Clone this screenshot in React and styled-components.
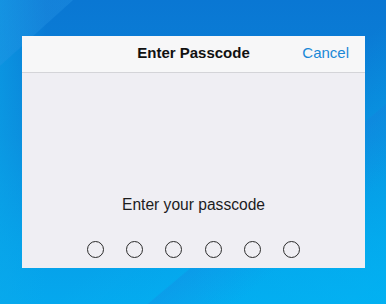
import React from "react";
import styled, { createGlobalStyle } from "styled-components";

const GlobalStyle = createGlobalStyle`
  html, body {
    margin: 0;
    padding: 0;
  }
  body {
    font-family: "Liberation Sans", Arial, sans-serif;
  }
`;

const Desktop = styled.div`
  width: 386px;
  height: 304px;
  box-sizing: border-box;
  padding: 36px 21px 36px 22px;
  overflow: hidden;
  background:
    linear-gradient(138deg, rgba(40, 150, 230, 0.35) 0%, rgba(40, 150, 230, 0.35) 10%, transparent 10.2%),
    linear-gradient(140deg, transparent 68%, rgba(30, 120, 220, 0.25) 68.3%, transparent 80%),
    linear-gradient(-40deg, rgba(0, 185, 245, 0.55) 0%, rgba(0, 185, 245, 0.25) 30%, transparent 45%),
    linear-gradient(to right, rgba(10, 170, 235, 0.5) 0%, transparent 12%),
    linear-gradient(180deg, #0a77d3 0%, #0b86da 45%, #069fe8 80%, #05a8ee 100%);
`;

const Sheet = styled.div`
  width: 343px;
  height: 232px;
  display: flex;
  flex-direction: column;
  background: #efeef3;
`;

const Header = styled.div`
  height: 37px;
  flex-shrink: 0;
  box-sizing: border-box;
  display: grid;
  grid-template-columns: 1fr auto 1fr;
  align-items: center;
  background: #f7f7f8;
  border-bottom: 1px solid #d4d4d8;
  padding: 0 16px 4px;
`;

const Title = styled.div`
  grid-column: 2;
  font-size: 15px;
  font-weight: bold;
  color: #111;
`;

const CancelButton = styled.button`
  justify-self: end;
  border: none;
  background: none;
  padding: 0;
  font-family: inherit;
  font-size: 15px;
  color: #1a88d6;
  cursor: pointer;
`;

const Body = styled.div`
  flex: 1;
  display: flex;
  flex-direction: column;
  align-items: center;
  justify-content: flex-end;
  padding-bottom: 10px;
`;

const Prompt = styled.div`
  font-size: 15.6px;
  line-height: 20px;
  color: #1c1c1e;
  margin-bottom: 26px;
`;

const Dots = styled.div`
  display: flex;
  gap: 22.4px;
`;

const Dot = styled.span`
  width: 17px;
  height: 17px;
  box-sizing: border-box;
  border-radius: 50%;
  border: 1.3px solid #2a2a2a;
  background: ${(p) => (p.$filled ? "#2a2a2a" : "transparent")};
`;

export default function App() {
  const entered = 0;
  return (
    <>
      <GlobalStyle />
      <Desktop>
        <Sheet>
          <Header>
            <Title>Enter Passcode</Title>
            <CancelButton>Cancel</CancelButton>
          </Header>
          <Body>
            <Prompt>Enter your passcode</Prompt>
            <Dots>
              {[0, 1, 2, 3, 4, 5].map((i) => (
                <Dot key={i} $filled={i < entered} />
              ))}
            </Dots>
          </Body>
        </Sheet>
      </Desktop>
    </>
  );
}
